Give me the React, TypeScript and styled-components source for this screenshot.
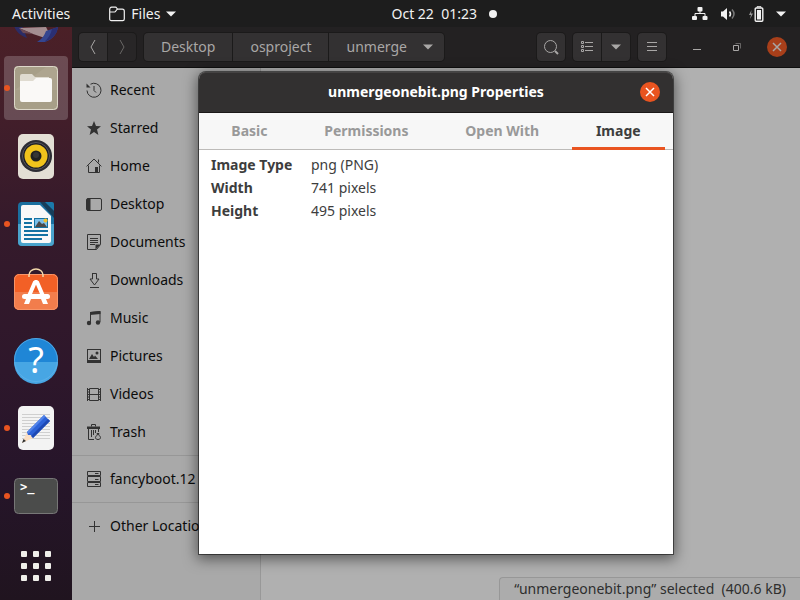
import React from "react";
import styled, { createGlobalStyle, css } from "styled-components";

const GlobalStyle = createGlobalStyle`
  *, *::before, *::after { box-sizing: border-box; }
  body { margin: 0; background: #1d1d1d; }
  body, button, table { font-family: "Noto Sans", "Open Sans", sans-serif; font-size: 14px; line-height: 20px; }
  button { border: 0; padding: 0; background: none; color: inherit; cursor: pointer; }
  a { color: inherit; text-decoration: none; }
  svg { display: block; flex: none; }
`;

const Desktop = styled.div`
  display: flex;
  flex-direction: column;
  height: 100vh;
  overflow: hidden;
`;

/* ---------- top bar ---------- */

const TopBar = styled.header`
  flex: none;
  display: flex;
  align-items: center;
  justify-content: space-between;
  height: 27px;
  padding: 0 14px 0 12px;
  background: #1d1d1d;
  color: #f2f2f2;
`;

const BarGroup = styled.div<{ $gap: number }>`
  display: flex;
  align-items: center;
  gap: ${(p) => p.$gap}px;
`;

const BarButton = styled.button<{ $gap?: number }>`
  display: flex;
  align-items: center;
  gap: ${(p) => p.$gap ?? 6}px;
`;

const Clock = styled(BarButton)`
  padding-left: 20px;
  white-space: pre;
`;

const NoticeDot = styled.span`
  width: 8px;
  height: 8px;
  margin-left: 6px;
  border-radius: 50%;
  background: #f2f2f2;
`;

/* ---------- dock ---------- */

const Work = styled.div`
  flex: 1;
  display: flex;
  min-height: 0;
`;

const Dock = styled.nav`
  flex: none;
  display: flex;
  flex-direction: column;
  justify-content: flex-end;
  align-items: center;
  gap: 4px;
  width: 72px;
  padding-bottom: 2px;
  overflow: hidden;
  background: linear-gradient(180deg, #4b2027 0%, #421e2a 16%, #351a2b 34%, #2e172b 60%, #26152a 78%, #20141f 100%);
`;

const DockItem = styled.button<{ $active?: boolean; $running?: boolean }>`
  flex: none;
  position: relative;
  width: 64px;
  height: 64px;
  border-radius: 4px;
  background: ${(p) => (p.$active ? "rgba(255, 255, 255, 0.2)" : "none")};
  ${(p) =>
    p.$running &&
    css`
      &::before {
        content: "";
        position: absolute;
        left: 0;
        top: 29px;
        width: 6px;
        height: 6px;
        border-radius: 50%;
        background: #e95420;
      }
    `}
`;

const AppsButton = styled(DockItem)`
  margin-top: 2px;
`;

/* ---------- file manager window ---------- */

const Window = styled.main`
  flex: 1;
  position: relative;
  display: flex;
  flex-direction: column;
  min-width: 0;
  background: #b0b0b0;
`;

const HeaderBar = styled.div`
  flex: none;
  display: flex;
  align-items: center;
  height: 41px;
  gap: 8px;
  padding: 0 13px 0 7px;
  background: #232122;
  border-bottom: 1px solid #0f0f0f;
  color: #a9a7a6;
`;

const Linked = styled.div`
  display: flex;
  gap: 1px;
  border-radius: 4px;
  overflow: hidden;
  background: #1b1a1a;
  box-shadow: 0 0 0 1px #1b1a1a;
`;

const ToolButton = styled.button<{ $dim?: boolean }>`
  display: flex;
  align-items: center;
  justify-content: center;
  width: 28px;
  height: 28px;
  background: ${(p) => (p.$dim ? "#282627" : "#333132")};
`;

const PathButton = styled(ToolButton)`
  width: auto;
  gap: 16px;
  padding: 0 17px;
`;

const MenuPathButton = styled(PathButton)`
  padding-right: 11px;
`;

const Spacer = styled.div`
  flex: 1;
`;

const WindowControls = styled.div`
  display: flex;
  gap: 20px;
  margin-left: 13px;
`;

const RoundButton = styled.button<{ $fill?: string; $ink?: string }>`
  display: grid;
  place-items: center;
  width: 20px;
  height: 20px;
  border-radius: 50%;
  background: ${(p) => p.$fill ?? "none"};
  color: ${(p) => p.$ink ?? "inherit"};
`;

const Body = styled.div`
  flex: 1;
  display: flex;
  min-height: 0;
`;

const Sidebar = styled.nav`
  flex: none;
  width: 189px;
  padding-top: 3px;
  overflow: hidden;
  background: #a9a9a9;
  border-right: 1px solid #989898;
  color: #0c0c0c;
`;

const Place = styled.a`
  display: flex;
  align-items: center;
  gap: 8px;
  height: 38px;
  padding-left: 14px;
  white-space: nowrap;
  svg { color: #323232; }
`;

const Rule = styled.hr`
  height: 1px;
  margin: 4px 0;
  border: 0;
  background: #979797;
`;

const FileArea = styled.section`
  flex: 1;
  display: flex;
  justify-content: flex-end;
  align-items: flex-end;
  min-width: 0;
`;

const Status = styled.div`
  padding: 1px 14px 1px 14px;
  border: 1px solid #979797;
  border-width: 1px 0 0 1px;
  border-radius: 4px 0 0 0;
  background: #acacac;
  color: #2e2e2e;
  white-space: pre;
`;

/* ---------- properties dialog ---------- */

const Overlay = styled.div`
  position: absolute;
  inset: 0;
  display: grid;
  place-items: center;
  padding-bottom: 2px;
`;

const Dialog = styled.section`
  display: flex;
  flex-direction: column;
  width: min(474px, 100%);
  height: min(482px, 100%);
  border-radius: 7px 7px 0 0;
  background: #fff;
  color: #3d3d3d;
  box-shadow: 0 0 0 1px rgba(0, 0, 0, 0.5), 0 3px 14px 2px rgba(0, 0, 0, 0.5);
`;

const TitleBar = styled.div`
  display: grid;
  grid-template-columns: 20px 1fr 20px;
  align-items: center;
  height: 41px;
  padding: 0 13px;
  border-radius: 7px 7px 0 0;
  background: #323030;
  border-bottom: 1px solid #1b1818;
  box-shadow: inset 0 1px 0 #454343;
`;

const Title = styled.h1`
  grid-column: 2;
  margin: 0;
  font-size: 14px;
  line-height: 20px;
  font-weight: 700;
  text-align: center;
  color: #fff;
`;

const Tabs = styled.div`
  display: flex;
  gap: 8px;
  height: 37px;
  padding: 0 8px;
  background: #f7f7f7;
  box-shadow: inset 0 -1px 0 #bdbbb9;
`;

const Tab = styled.button<{ $selected?: boolean }>`
  flex: 1 1 auto;
  padding: 3px 16px 0;
  border-bottom: 3px solid ${(p) => (p.$selected ? "#e95420" : "transparent")};
  font-weight: 700;
  color: ${(p) => (p.$selected ? "#3d3d3d" : "#999")};
`;

const Facts = styled.table`
  align-self: flex-start;
  margin: 4px 12px;
  border-spacing: 0;
  th, td { height: 23px; padding: 0; text-align: left; }
  th { min-width: 100px; padding-right: 18px; }
`;

/* ---------- icons ---------- */

const Caret = () => (
  <svg width="10" height="6" viewBox="0 0 10 6"><path d="M0 .5h10L5 5.5z" fill="currentColor" /></svg>
);

const Cross = () => (
  <svg width="10" height="10" viewBox="0 0 10 10"><path d="M1 1l8 8M9 1L1 9" stroke="currentColor" strokeWidth="1.5" /></svg>
);

const Line = ({ children }: { children: React.ReactNode }) => (
  <svg width="16" height="16" viewBox="0 0 16 16" fill="none" stroke="currentColor">{children}</svg>
);

const solid = { fill: "currentColor", stroke: "none" };

const places: [string, React.ReactNode][] = [
  ["Recent", <>
    <path d="M4.5 2.2A7 7 0 1 1 1 8.5" />
    <path d="M.5 1.5v4h4z" {...solid} />
    <path d="M8 4v4.5l2 2" />
  </>],
  ["Starred", <path d="M8 1l2 5 5 .2-4 3.3L12.4 15 8 11.9 3.6 15 5 9.5 1 6.2 6 6z" {...solid} />],
  ["Home", <>
    <path d="M.6 8.400L8 1l7.400 7.400M2.500 7.500v7h11v-7M12.500 1.500v3" />
    <path d="M9 9h3v6H9z" {...solid} />
  </>],
  ["Desktop", <>
    <rect x=".5" y="2.5" width="15" height="12" rx="1.5" />
    <path d="M1 2.5h3.5v12H1z" {...solid} />
  </>],
  ["Documents", <>
    <path d="M1.5.5h13v10l-4 5h-9zM4 4.5h8M4 6.5h8M4 8.5h8M4 10.5h5" />
    <path d="M9.5 10.5h5l-5 5z" {...solid} />
  </>],
  ["Downloads", <path d="M6.5 1v6H4l4.500 6L13 7h-2.500V1.500h-4M4 15.500h9" />],
  ["Music", <>
    <path d="M4.5 13V2.5l9.500-1V12" />
    <path d="M4 2l10.500-1v3L4 5z" {...solid} />
    <circle cx="3" cy="13" r="2.2" {...solid} /><circle cx="12" cy="12.5" r="2.2" {...solid} />
  </>],
  ["Pictures", <>
    <rect x="1.5" y="1.5" width="13" height="13" />
    <path d="M1 12h14v3H1zM3 11l3-5 2 3 1-1.500L12 11z" {...solid} />
    <circle cx="11" cy="5" r="1.5" {...solid} />
  </>],
  ["Videos", <>
    <path d="M1.5 2v13M14.5 2v13M3.5 2.5h9v12h-9zM3.5 8.5h9" />
    <path d="M2 3.5h1.5M2 6h1.5M2 8.5h1.5M2 11h1.5M2 13.5h1.5M13 3.5h1.5M13 6h1.5M13 8.5h1.5M13 11h1.5M13 13.5h1.5" />
  </>],
  ["Trash", <>
    <path d="M5.5 2.5v-2h4v2M2.5 5v10.5H8M5.5 6v7M7.5 6v5M9.5 6v3M12.5 5v3" />
    <path d="M1 2.500h13V5H1z" {...solid} />
    <path d="M9.5 13.5c0-1 1-2 2-2.500l-.5-1.500h2L12.500 11c1 .5 2 1.500 2 2.500 0 1.300-1 2-2.500 2s-2.500-.7-2.500-2z" />
  </>],
];

const ServerIcon = () => (
  <Line><path d="M1.5.5h13v4h-13zM1.5 5.5h13v5h-13zM1.5 11.500h13v4h-13zM9 2.500h3.500M9 8.500h3.500M9 13.500h3.500" /></Line>
);

const Art = ({ children }: { children: React.ReactNode }) => (
  <svg width="64" height="64" viewBox="0 0 64 64">{children}</svg>
);

const MailArt = () => (
  <Art>
    <path d="M10 38c2 5 5 9 13 12l-5-12z" fill="#2b2c66" />
    <path d="M15 40l27-1 2 4-3 7-12-4z" fill="#a48e91" />
    <path d="M15 40l14 6-10-1z" fill="#6c4a55" />
    <path d="M33 54c5-3 7-6 9-11l12-4c-1 7-5 12-13 15z" fill="#34458f" />
    <path d="M40 54c4-3 7-8 8-13l6-2c-1 7-5 12-14 15z" fill="#2a2f74" />
  </Art>
);

const FilesArt = () => (
  <Art>
    <rect x="10" y="10" width="44" height="44" rx="4" fill="#a79f88" />
    <path d="M11 34L42 11h8a3 3 0 0 1 3 3v20z" fill="#b2aa94" opacity=".6" />
    <rect x="10.5" y="10.5" width="43" height="43" rx="4" fill="none" stroke="#ddd8ca" />
    <path d="M16 20a2 2 0 0 1 2-2h10l3 3h14v8H16z" fill="#dfdbd0" />
    <path d="M16 25h13l3-3h14a2 2 0 0 1 2 2v20a2 2 0 0 1-2 2H18a2 2 0 0 1-2-2z" fill="#faf9f7" />
  </Art>
);

const SpeakerArt = () => (
  <Art>
    <rect x="14" y="10" width="36" height="45" rx="5" fill="#e3dfd5" />
    <circle cx="32" cy="32" r="16" fill="#2c2c33" />
    <circle cx="32" cy="32" r="13.5" fill="#1f2027" stroke="#565760" />
    <circle cx="32" cy="32" r="11.5" fill="#f0c31c" />
    <circle cx="32" cy="32" r="5.5" fill="#202020" />
    <circle cx="32" cy="31" r="3" fill="#353535" />
  </Art>
);

const WriterArt = () => (
  <Art>
    <path d="M18 10h20l12 13v27a4 4 0 0 1-4 4H18a4 4 0 0 1-4-4V14a4 4 0 0 1 4-4z" fill="#1a6f9f" />
    <path d="M14 32h36v18a4 4 0 0 1-4 4H18a4 4 0 0 1-4-4z" fill="#4aa3cc" />
    <path d="M19 13h17l11 11v25a2 2 0 0 1-2 2H19a2 2 0 0 1-2-2V15a2 2 0 0 1 2-2z" fill="#f8f8f8" />
    <path d="M36 10h6l8 9v7z" fill="#173d59" />
    <path d="M41 10h7a2 2 0 0 1 2 2v7z" fill="#1b7aaa" />
    <path d="M20 27h8M20 31h8M20 35h8M20 39h24M20 43h24M20 47h18" stroke="#1372a3" strokeWidth="2" />
    <rect x="30.5" y="26.5" width="13" height="9" fill="#7cc0ea" stroke="#1372a3" />
    <circle cx="41.5" cy="28.5" r="2" fill="#f0c030" />
    <path d="M31 35l4-6 3 3 2-1 3 4z" fill="#4a4a4a" />
  </Art>
);

const SoftwareArt = () => (
  <Art>
    <rect x="10" y="14" width="44" height="36" rx="5" fill="#f26026" />
    <path d="M10 32h44v13a5 5 0 0 1-5 5H15a5 5 0 0 1-5-5z" fill="#f27d4c" />
    <rect x="10.5" y="14.5" width="43" height="35" rx="5" fill="none" stroke="#f79468" />
    <path d="M25 17v-2a7 6 0 0 1 14 0v2" fill="none" stroke="#f3d9aa" strokeWidth="1.5" />
    <path d="M20 44l2-5h5l-2 5zM37 39h5l2 5h-5z" fill="#fff" />
    <path d="M25 36l6-14h2l6 14" fill="none" stroke="#fff" strokeWidth="4" strokeLinejoin="bevel" />
    <rect x="18" y="34" width="28" height="5" rx="2.5" fill="#fff" />
  </Art>
);

const HelpArt = () => (
  <Art>
    <circle cx="32" cy="32" r="22" fill="#1f86d6" />
    <path d="M10 34h44a22 22 0 0 1-44 0z" fill="#47a6e4" />
    <circle cx="32" cy="32" r="21.5" fill="none" stroke="#63b4ea" opacity=".7" />
    <text x="32" y="45" textAnchor="middle" fontSize="36" fill="#fff" fontFamily="Noto Sans, sans-serif">?</text>
  </Art>
);

const EditorArt = () => (
  <Art>
    <rect x="14" y="10" width="36" height="44" rx="5" fill="#f3f3f3" />
    <path d="M18 18.5h28M18 21.5h28M18 24.5h28M18 27.5h28M18 30.5h28M18 33.5h28M18 36.5h28M18 39.5h28M18 42.5h28" stroke="#cfcfcf" />
    <path d="M18 47l5-11 6 6z" fill="#fadfc4" />
    <path d="M18 47l1.500-4 2.500 2z" fill="#333" />
    <path d="M23 36l17-17 6 6-17 17-2-3-3 0z" fill="#2c62d8" />
    <path d="M27 40l17-17 2 2-17 17z" fill="#1c48b4" />
    <path d="M23 36l17-17 1.500 1.500-17 17z" fill="#5384ea" />
  </Art>
);

const TerminalArt = () => (
  <Art>
    <rect x="10.5" y="14.5" width="43" height="35" rx="4" fill="#4b4c4b" stroke="#777" />
    <text x="16" y="27" fontSize="12" fontWeight="700" fill="#fff" fontFamily="DejaVu Sans Mono, monospace">&gt;_</text>
  </Art>
);

const AppsArt = () => (
  <Art>
    {[17, 29, 41].map((y) =>
      [17, 29, 41].map((x) => <rect key={`${x}-${y}`} x={x} y={y} width="6" height="6" rx="1" fill="#f0efeb" />),
    )}
  </Art>
);

/* ---------- page ---------- */

export default function App() {
  return (
    <Desktop>
      <GlobalStyle />
      <TopBar>
        <BarGroup $gap={39}>
          <BarButton>Activities</BarButton>
          <BarButton>
            <svg width="16" height="16" viewBox="0 0 16 16" fill="none" stroke="currentColor" strokeWidth="1.2">
              <path d="M.7 13V3.500c0-1.500.6-2.300 2-2.300h3.800c1.200 0 1.500 2 2.500 2h4.300c1.400 0 2 .7 2 2V13c0 1-.7 1.600-1.600 1.600H2.300C1.300 14.600.7 14 .7 13zM1 6h4.500c1.500 0 1.500-2.800 3.500-2.800" />
            </svg>
            Files
            <Caret />
          </BarButton>
        </BarGroup>
        <Clock>
          {"Oct 22  01:23"}
          <NoticeDot />
        </Clock>
        <BarButton $gap={12} aria-label="System menu">
          <svg width="16" height="16" viewBox="0 0 16 16">
            <path d="M8 5v3M3 11.500V7.500h10v4" fill="none" stroke="currentColor" />
            <rect x="5.5" y="1" width="5" height="4.5" rx="1" fill="currentColor" />
            <rect x="0" y="10" width="5" height="4" rx="1" fill="currentColor" />
            <rect x="10.5" y="10" width="5" height="4" rx="1" fill="currentColor" />
          </svg>
          <svg width="16" height="16" viewBox="0 0 16 16">
            <path d="M1 5.5h2L7 2v12l-4-3.500H1z" fill="currentColor" />
            <path d="M9.5 5.5q2 2.500 0 5" fill="none" stroke="currentColor" strokeWidth="1.5" />
            <path d="M12 3.5q4 4.500 0 9" fill="none" stroke="#777" strokeWidth="1.5" />
          </svg>
          <svg width="16" height="16" viewBox="0 0 16 16">
            <path d="M3.5 4L1 9h2l-1 4 3-5.500H3z" fill="#999" />
            <path d="M9 1.500V.7h4v.8" fill="none" stroke="currentColor" />
            <rect x="7.2" y="2" width="7.6" height="13.3" rx="1" fill="none" stroke="currentColor" strokeWidth="1.4" />
            <rect x="9" y="4" width="4" height="9.5" fill="currentColor" />
          </svg>
          <Caret />
        </BarButton>
      </TopBar>

      <Work>
        <Dock aria-label="Dock">
          <DockItem aria-label="Mail"><MailArt /></DockItem>
          <DockItem aria-label="Files" $active $running><FilesArt /></DockItem>
          <DockItem aria-label="Music player"><SpeakerArt /></DockItem>
          <DockItem aria-label="Writer" $running><WriterArt /></DockItem>
          <DockItem aria-label="Software"><SoftwareArt /></DockItem>
          <DockItem aria-label="Help"><HelpArt /></DockItem>
          <DockItem aria-label="Text editor" $running><EditorArt /></DockItem>
          <DockItem aria-label="Terminal" $running><TerminalArt /></DockItem>
          <AppsButton aria-label="Show applications"><AppsArt /></AppsButton>
        </Dock>

        <Window>
          <HeaderBar>
            <Linked>
              <ToolButton aria-label="Back">
                <Line><path d="M10 1L6 8l4 7" /></Line>
              </ToolButton>
              <ToolButton $dim aria-label="Forward">
                <Line><path d="M6 1l4 7-4 7" opacity=".5" /></Line>
              </ToolButton>
            </Linked>
            <Linked>
              <PathButton>Desktop</PathButton>
              <PathButton>osproject</PathButton>
              <MenuPathButton>unmerge <Caret /></MenuPathButton>
            </Linked>
            <Spacer />
            <Linked>
              <ToolButton aria-label="Search">
                <Line><circle cx="7.5" cy="7.5" r="6" /><path d="M12 12l3 3" strokeWidth="2" /></Line>
              </ToolButton>
            </Linked>
            <Linked>
              <ToolButton aria-label="List view">
                <Line>
                  <path d="M2.5 2.5h2v2h-2zM2.5 6.500h2v2h-2zM2.5 10.500h2v2h-2z" />
                  <path d="M6 3.5h8M6 7.5h8M6 11.5h8" />
                </Line>
              </ToolButton>
              <ToolButton aria-label="View options"><Caret /></ToolButton>
            </Linked>
            <Linked>
              <ToolButton aria-label="Menu">
                <Line><path d="M3 3.5h10M3 7.5h10M3 11.5h10" /></Line>
              </ToolButton>
            </Linked>
            <WindowControls>
              <RoundButton aria-label="Minimize"><Line><path d="M4 10.5h8" /></Line></RoundButton>
              <RoundButton aria-label="Restore">
                <Line>
                  <path d="M6.5 4.5h5v5" opacity=".5" />
                  <path d="M4.5 6.5h5v5h-5z" />
                </Line>
              </RoundButton>
              <RoundButton $fill="#a83f1a" aria-label="Close window"><Cross /></RoundButton>
            </WindowControls>
          </HeaderBar>

          <Body>
            <Sidebar aria-label="Places">
              {places.map(([name, icon]) => (
                <Place href="#" key={name}><Line>{icon}</Line>{name}</Place>
              ))}
              <Rule />
              <Place href="#"><ServerIcon />fancyboot.12</Place>
              <Rule />
              <Place href="#"><Line><path d="M8.5 3v11M3 8.5h11" /></Line>Other Locations</Place>
            </Sidebar>
            <FileArea>
              <Status>{"“unmergeonebit.png” selected  (400.6 kB)"}</Status>
            </FileArea>
          </Body>

          <Overlay>
            <Dialog role="dialog" aria-labelledby="dialog-title">
              <TitleBar>
                <Title id="dialog-title">unmergeonebit.png Properties</Title>
                <RoundButton $fill="#e95420" $ink="#fff" aria-label="Close"><Cross /></RoundButton>
              </TitleBar>
              <Tabs role="tablist">
                <Tab role="tab">Basic</Tab>
                <Tab role="tab">Permissions</Tab>
                <Tab role="tab">Open With</Tab>
                <Tab role="tab" aria-selected $selected>Image</Tab>
              </Tabs>
              <Facts>
                <tbody>
                  <tr><th scope="row">Image Type</th><td>png (PNG)</td></tr>
                  <tr><th scope="row">Width</th><td>741 pixels</td></tr>
                  <tr><th scope="row">Height</th><td>495 pixels</td></tr>
                </tbody>
              </Facts>
            </Dialog>
          </Overlay>
        </Window>
      </Work>
    </Desktop>
  );
}
